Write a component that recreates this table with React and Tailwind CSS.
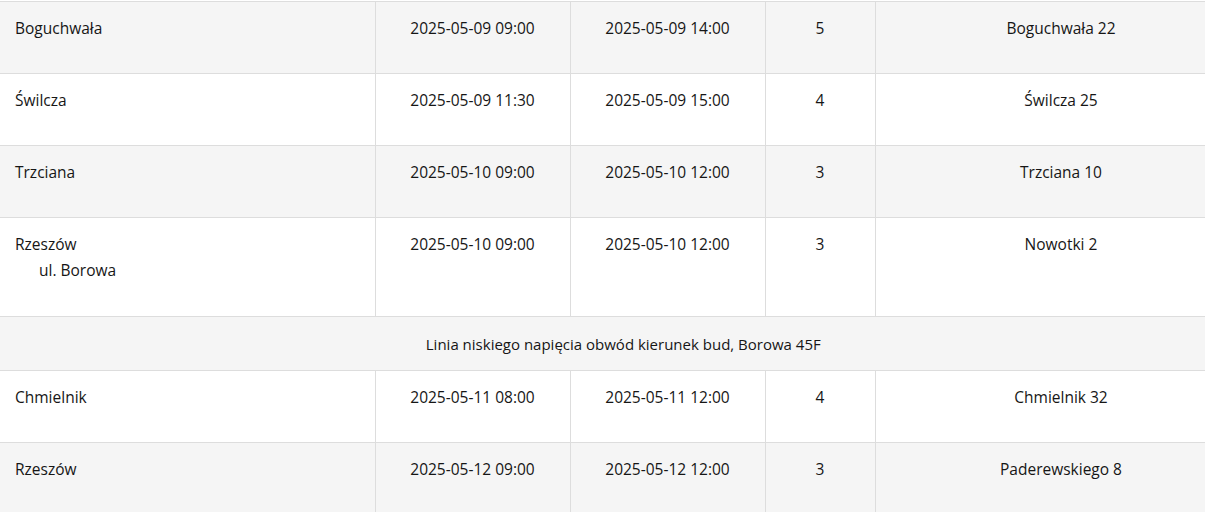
const rows = [
    { city: "Boguchwała", from: "2025-05-09 09:00", to: "2025-05-09 14:00", n: "5", addr: "Boguchwała 22" },
    { city: "Świlcza", from: "2025-05-09 11:30", to: "2025-05-09 15:00", n: "4", addr: "Świlcza 25" },
    { city: "Trzciana", from: "2025-05-10 09:00", to: "2025-05-10 12:00", n: "3", addr: "Trzciana 10" },
    { city: "Rzeszów", sub: "ul. Borowa", from: "2025-05-10 09:00", to: "2025-05-10 12:00", n: "3", addr: "Nowotki 2", note: "Linia niskiego napięcia obwód kierunek bud, Borowa 45F" },
    { city: "Chmielnik", from: "2025-05-11 08:00", to: "2025-05-11 12:00", n: "4", addr: "Chmielnik 32" },
    { city: "Rzeszów", from: "2025-05-12 09:00", to: "2025-05-12 12:00", n: "3", addr: "Paderewskiego 8" },
];

const cell = "border border-[#dddddd] align-top pt-[13px] pb-[32px] leading-[26px]";

export default function App() {
    let stripe = 0;
    return (
        <div className="w-[1205px] h-[512px] overflow-hidden bg-white pt-px"
            style={{ fontFamily: '"Open Sans", "Noto Sans", sans-serif' }}>
            <table className="w-[1247px] border-collapse table-fixed text-[15.5px] text-[#161616]">
                <colgroup>
                    <col className="w-[375px]" />
                    <col className="w-[195px]" />
                    <col className="w-[195px]" />
                    <col className="w-[110px]" />
                    <col className="w-[372px]" />
                </colgroup>
                <tbody>
                    {rows.map((r, i) => {
                        const bg = stripe++ % 2 === 0 ? "bg-[#f5f5f5]" : "bg-white";
                        const noteBg = r.note ? (stripe++ % 2 === 0 ? "bg-[#f5f5f5]" : "bg-white") : null;
                        return [
                            <tr key={i} className={bg}>
                                <td className={`${cell} border-l-0 pl-[15px] text-left`}>
                                    <div>{r.city}</div>
                                    {r.sub && <div className="pl-6 leading-[27px]">{r.sub}</div>}
                                </td>
                                <td className={`${cell} text-center`}>{r.from}</td>
                                <td className={`${cell} text-center`}>{r.to}</td>
                                <td className={`${cell} text-center`}>{r.n}</td>
                                <td className={`${cell} text-center`}>{r.addr}</td>
                            </tr>,
                            r.note && (
                                <tr key={i + "n"} className={noteBg}>
                                    <td colSpan={5} className="border border-[#dddddd] border-l-0 pt-[14px] pb-[13px] leading-[26px] text-center text-[15px]">
                                        {r.note}
                                    </td>
                                </tr>
                            ),
                        ];
                    })}
                </tbody>
            </table>
        </div>
    );
}
